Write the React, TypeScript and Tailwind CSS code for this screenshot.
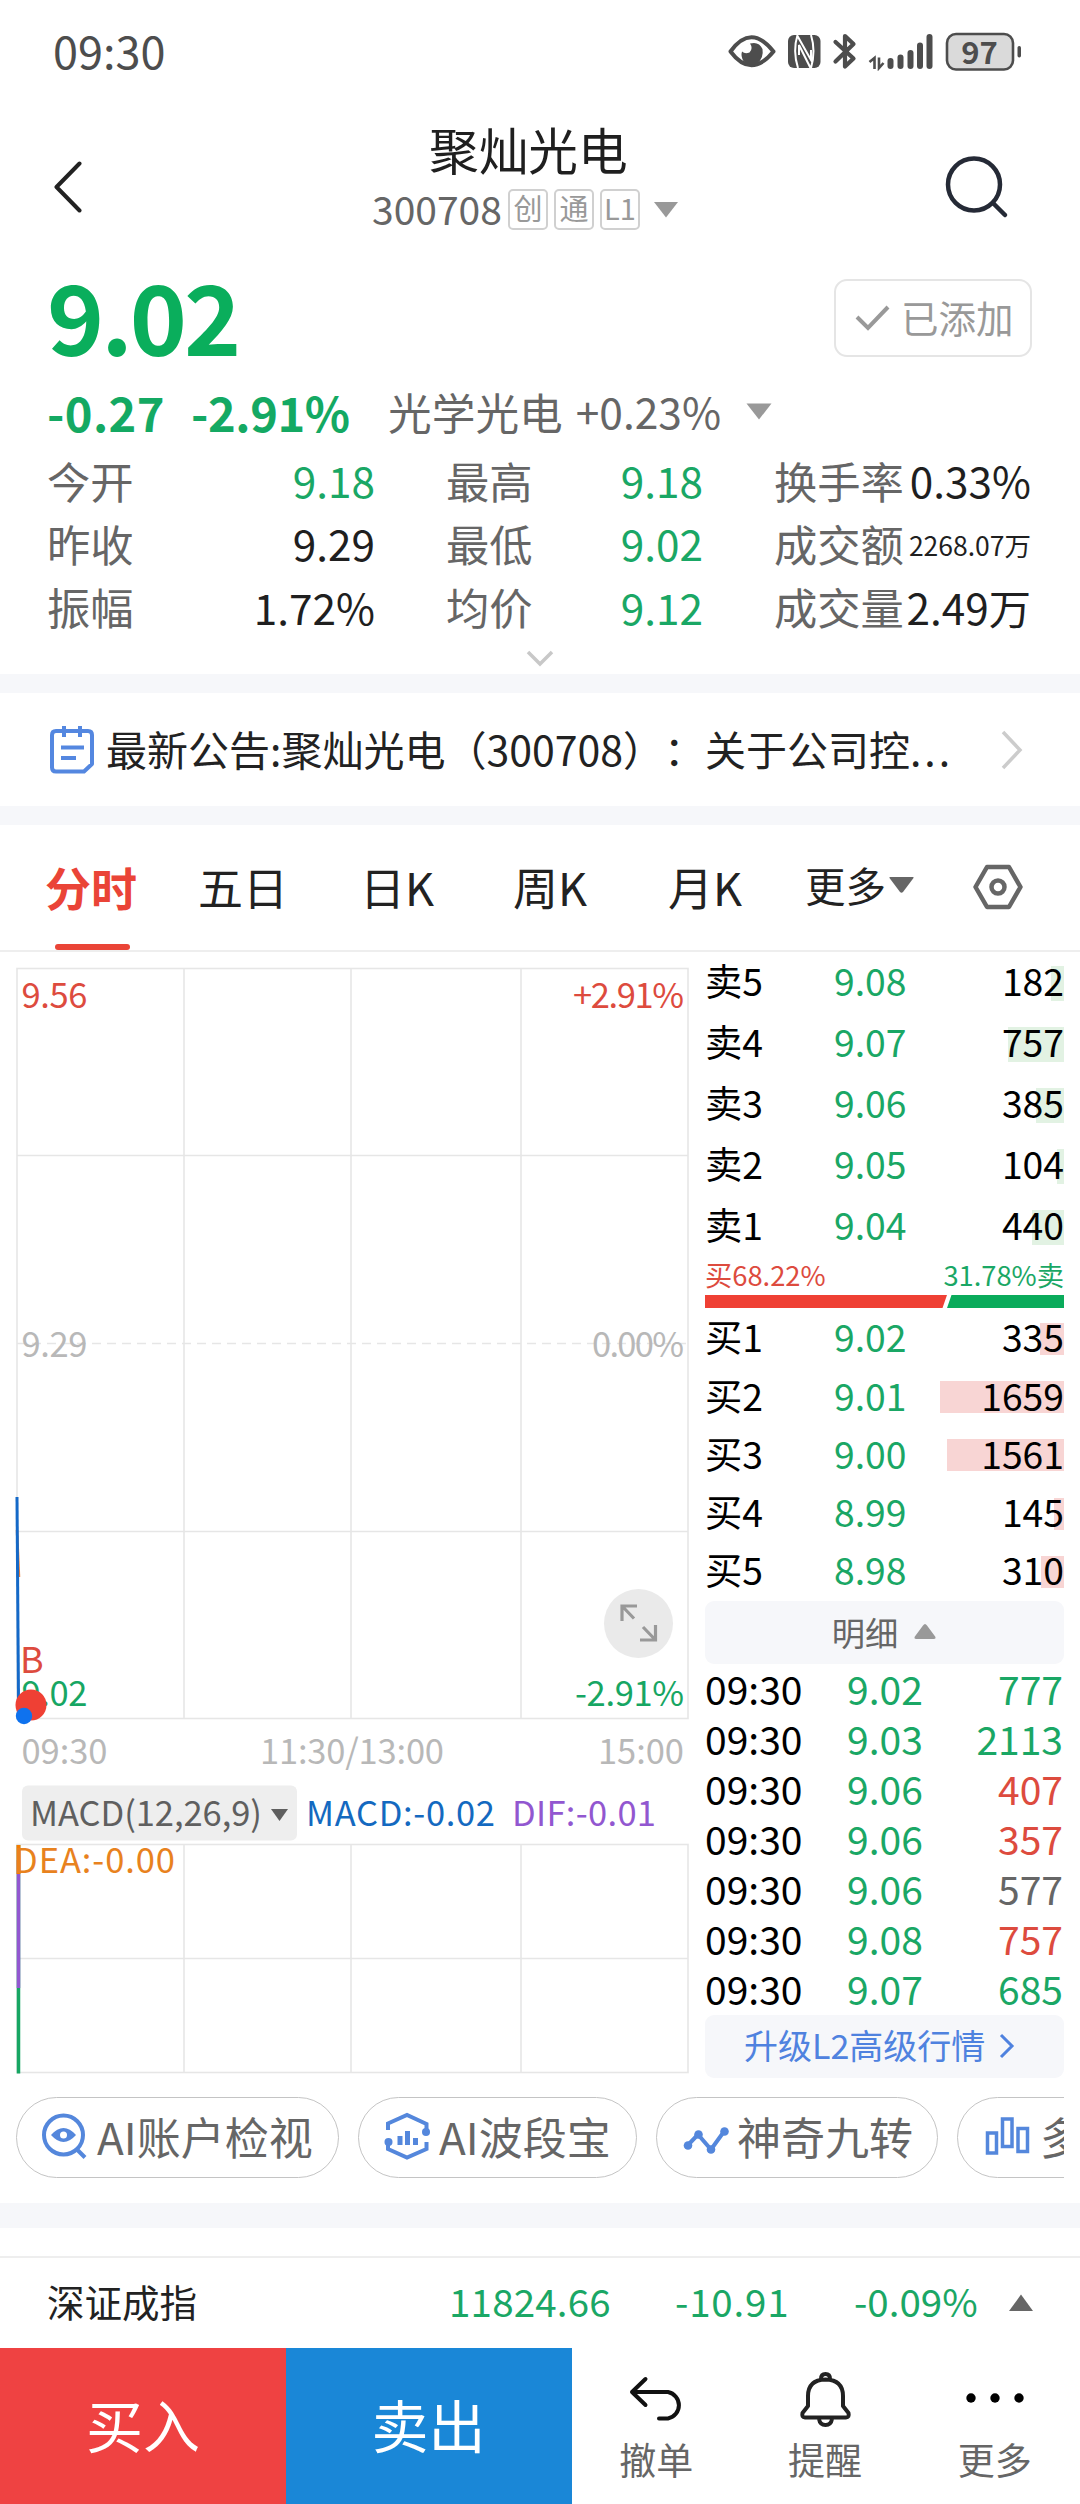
import React from "react";

const GREEN = "#17a663";
const RED = "#dd4b3e";

const quoteRows = [
  [
    { label: "今开", value: "9.18", color: "text-[#1aa765]" },
    { label: "最高", value: "9.18", color: "text-[#1aa765]" },
    { label: "换手率", value: "0.33%", color: "text-[#1f1f1f]" },
  ],
  [
    { label: "昨收", value: "9.29", color: "text-[#1f1f1f]" },
    { label: "最低", value: "9.02", color: "text-[#1aa765]" },
    { label: "成交额", value: "2268.07万", color: "text-[#1f1f1f]", small: true },
  ],
  [
    { label: "振幅", value: "1.72%", color: "text-[#1f1f1f]" },
    { label: "均价", value: "9.12", color: "text-[#1aa765]" },
    { label: "成交量", value: "2.49万", color: "text-[#1f1f1f]" },
  ],
];

const sells = [
  { label: "卖5", price: "9.08", volume: "182", bar: 13 },
  { label: "卖4", price: "9.07", volume: "757", bar: 56 },
  { label: "卖3", price: "9.06", volume: "385", bar: 28 },
  { label: "卖2", price: "9.05", volume: "104", bar: 7 },
  { label: "卖1", price: "9.04", volume: "440", bar: 32 },
];

const buys = [
  { label: "买1", price: "9.02", volume: "335", bar: 24 },
  { label: "买2", price: "9.01", volume: "1659", bar: 124 },
  { label: "买3", price: "9.00", volume: "1561", bar: 117 },
  { label: "买4", price: "8.99", volume: "145", bar: 10 },
  { label: "买5", price: "8.98", volume: "310", bar: 23 },
];

const trades = [
  { price: "9.02", volume: "777", color: "text-[#1aa765]" },
  { price: "9.03", volume: "2113", color: "text-[#1aa765]" },
  { price: "9.06", volume: "407", color: "text-[#dd4b3e]" },
  { price: "9.06", volume: "357", color: "text-[#dd4b3e]" },
  { price: "9.06", volume: "577", color: "text-[#666666]" },
  { price: "9.08", volume: "757", color: "text-[#dd4b3e]" },
  { price: "9.07", volume: "685", color: "text-[#1aa765]" },
];

function StatusBar() {
  return (
    <div className="flex h-[105px] items-center justify-between pl-[53px] pr-[59px] text-[#4d4d4d]">
      <span className="pb-[7px] text-[45px] leading-none">09:30</span>
      <svg width="293" height="40" viewBox="728 31 293 40" className="mb-[3px]">
        <path d="M730.5 51.5 Q751 23 773.5 51.5 Q751 79 730.5 51.5Z" fill="none" stroke="#4d4d4d" strokeWidth="4" strokeLinejoin="round" />
        <path d="M750 43.500 Q759 41 762.500 49 Q764 58 757 63.500 Q749 67 743.500 61 Q740.500 56 742 51.500 Q745 54.500 749.500 52.500 Q753.500 48.500 750 43.500Z" fill="#4d4d4d" />
        <rect x="788" y="35" width="32.500" height="33" rx="6" fill="#4d4d4d" />
        <path d="M797.500 35 Q792.500 51 798 68 M797.500 36 L811 60 V50 M810.500 68 L799 45 V55 M811 35 Q816 51 811 68" fill="none" stroke="#fff" strokeWidth="2" />
        <path d="M835.500 42 L853.500 58.500 L845 66.500 V36 L853.500 44 L835.500 61.500" fill="none" stroke="#4d4d4d" strokeWidth="4.200" strokeLinecap="round" strokeLinejoin="round" />
        <path d="M869.500 62 L874.500 58 V69 M879 57.500 V68 L883.500 63" fill="none" stroke="#4d4d4d" strokeWidth="2.600" />
        <g stroke="#4d4d4d" strokeWidth="6" strokeLinecap="round">
          <path d="M890.500 61 V66" />
          <path d="M900.500 57.500 V66" />
          <path d="M910.500 53 V66" />
          <path d="M920 45.500 V66" />
          <path d="M929.500 37 V66" />
        </g>
        <rect x="947" y="34" width="66" height="35.500" rx="9" fill="#dadada" stroke="#4d4d4d" strokeWidth="2.600" />
        <rect x="1017.500" y="46" width="3.500" height="11.500" rx="1.700" fill="#4d4d4d" />
        <text x="979.500" y="63.500" fontSize="31" fontWeight="700" textAnchor="middle" fill="#4d4d4d">97</text>
      </svg>
    </div>
  );
}

function Header() {
  const tags = ["创", "通", "L1"];
  return (
    <header className="flex h-[153px]">
      <div className="w-[372px] pl-[52px] pt-[56px]">
        <svg width="32" height="52" viewBox="0 0 32 52" fill="none" stroke="#222" strokeWidth="4">
          <path d="M27.500 2.500 L4.500 26 L27.500 49.500" strokeLinecap="round" strokeLinejoin="round" />
        </svg>
      </div>
      <div className="w-[316px]">
        <h1 className="mt-[15px] h-[56px] pl-[57px] text-[49.7px] leading-[56px] text-[#1f1f1f]">聚灿光电</h1>
        <div className="mt-[14px] flex h-[40px] items-center">
          <span className="w-[136px] pb-[4px] text-[39px] leading-none text-[#666]">300708</span>
          {tags.map((tag) => (
            <span
              key={tag}
              className="mt-[-2px] mr-[6px] flex h-[41px] w-[40px] items-center justify-center rounded-[5px] border-2 border-[#d0d0d0] pb-[3px] text-[29px] leading-none text-[#999]"
            >
              {tag}
            </span>
          ))}
          <svg width="26" height="16" viewBox="0 0 26 16" className="ml-[7px]">
            <path d="M1 0 H25 L13 15.500Z" fill="#999" />
          </svg>
        </div>
      </div>
      <div className="pl-[257px] pt-[50px]">
        <svg width="64" height="64" viewBox="0 0 64 64" fill="none" stroke="#252a36" strokeWidth="4.500">
          <circle cx="29" cy="29.500" r="26" />
          <path d="M48 48 L60 60" strokeLinecap="round" />
        </svg>
      </div>
    </header>
  );
}

function Quote() {
  return (
    <section className="h-[416px] pl-[47px] pr-[48px]">
      <div className="flex h-[125px] items-center justify-between">
        <span className="pb-[14px] text-[97px] font-bold leading-none tracking-[-3px] text-[#0aae5c]">9.02</span>
        <button className="mb-[5px] flex h-[78px] w-[198px] items-center rounded-[13px] border-2 border-[#e5e5e5] pl-[19px]">
          <svg width="36" height="28" viewBox="0 0 36 28" fill="none" stroke="#999" strokeWidth="4">
            <path d="M2 13 L13 24 L33 3" />
          </svg>
          <span className="ml-[10px] pb-[3px] text-[37.5px] leading-none text-[#999]">已添加</span>
        </button>
      </div>
      <div className="flex h-[62px] items-center pb-[5px] leading-none">
        <span className="w-[144px] text-[47px] font-bold tracking-[0.4px] text-[#14a963]">-0.27</span>
        <span className="w-[197px] text-[47px] font-bold tracking-[-0.4px] text-[#14a963]">-2.91%</span>
        <span className="text-[43.7px] text-[#666]">光学光电</span>
        <span className="ml-[13px] text-[42.5px] text-[#666]">+0.23%</span>
        <svg width="26" height="17" viewBox="0 0 26 17" className="ml-[25px]">
          <path d="M0.500 0.500 H25.500 L13 16.500Z" fill="#999" />
        </svg>
      </div>
      <div className="mt-[6px] h-[190px]">
        {quoteRows.map((row, i) => (
          <div key={i} className="grid h-[63.3px] grid-cols-[328px_257px_257px] items-center gap-x-[71px] pb-[5px] leading-none">
            {row.map((cell) => (
              <div key={cell.label} className="flex items-center justify-between whitespace-nowrap">
                <span className="text-[43.3px] text-[#666]">{cell.label}</span>
                <span className={`${cell.small ? "pt-[3px] text-[26.5px]" : "text-[42.3px]"} ${cell.color}`}>
                  {cell.value}
                </span>
              </div>
            ))}
          </div>
        ))}
      </div>
      <svg width="28" height="17" viewBox="0 0 28 17" className="ml-[479px] mt-[9px]" fill="none" stroke="#c8c8c8" strokeWidth="3.500">
        <path d="M2 2 L14 14 L26 2" />
      </svg>
    </section>
  );
}

function Notice() {
  return (
    <div className="flex h-[113px] items-center pl-[50px] pr-[57px]">
      <svg width="44" height="50" viewBox="0 0 44 50" fill="none" stroke="#5487e0" strokeWidth="4">
        <path d="M6 6 H38 Q42 6 42 10 V39 L34 46.500 H6 Q2 46.500 2 42.500 V10 Q2 6 6 6Z" strokeLinejoin="round" />
        <path d="M14 1 V12 M30 1 V12 M11 22.500 H34 M11 33 H26" />
      </svg>
      <p className="ml-[12px] w-[850px] whitespace-nowrap pb-[3px] text-[41px] leading-none text-[#222] [text-spacing-trim:space-all]">
        最新公告:聚灿光电（300708）：关于公司控<span className="tracking-[3px]">...</span>
      </p>
      <svg width="22" height="40" viewBox="0 0 22 40" className="ml-auto" fill="none" stroke="#ccc" strokeWidth="3.500">
        <path d="M2 2 L19 20 L2 38" />
      </svg>
    </div>
  );
}

function Tabs() {
  return (
    <nav className="flex h-[127px] items-center border-b-2 border-[#eee] text-[45px] leading-none text-[#222]">
      <div className="relative flex h-full w-[198px] items-center pl-[45px] font-bold text-[#ea4437]">
        <span className="pb-[3px] text-[46px]">分时</span>
        <i className="absolute bottom-0 left-[55px] h-[6px] w-[75px] rounded-full bg-[#ea4437]" />
      </div>
      <span className="w-[162px] pb-[2px]">五日</span>
      <span className="w-[153px] pb-[2px]">日K</span>
      <span className="w-[155px] pb-[2px]">周K</span>
      <span className="w-[137px] pb-[2px]">月K</span>
      <span className="pb-[4px] text-[40.5px]">更多</span>
      <svg width="25" height="16" viewBox="0 0 25 16" className="ml-[3px] mb-[5px]">
        <path d="M1 0 H24 Q25 0 24.500 1 L14 15 Q12.500 16.500 11 15 L0.500 1 Q0 0 1 0Z" fill="#666" />
      </svg>
      <svg width="50" height="46" viewBox="0 0 50 46" className="ml-[59px] mb-[2px]" fill="none" stroke="#666" strokeWidth="4.500" strokeLinejoin="round">
        <path d="M14 3 H36 L47.500 23 L36 43 H14 L2.500 23Z" />
        <circle cx="25" cy="23" r="6.500" />
      </svg>
    </nav>
  );
}

function Charts() {
  return (
    <svg width="700" height="1138" viewBox="0 952 700 1138" className="shrink-0">
      <g stroke="#e6e6e6" strokeWidth="1.600" fill="none">
        <rect x="17" y="968.500" width="671" height="750" />
        <path d="M184 969 V1718 M351 969 V1718 M521 969 V1718 M17 1155.500 H688 M17 1531.500 H688" />
        <path d="M17 1343.500 H688" strokeDasharray="9 6" />
        <rect x="17" y="1844.500" width="671" height="228" />
        <path d="M184 1844 V2072 M351 1844 V2072 M521 1844 V2072 M17 1958.500 H688" />
      </g>
      <g fontSize="34.500">
        <text x="21.500" y="1008" fill={RED} textLength="66">9.56</text>
        <text x="684" y="1008" fill={RED} textAnchor="end" textLength="111">+2.91%</text>
        <text x="21.500" y="1356.500" fill="#b8b8b8" textLength="66">9.29</text>
        <text x="684" y="1356.500" fill="#b8b8b8" textAnchor="end" textLength="92">0.00%</text>
        <text x="21.500" y="1706" fill={GREEN} textLength="66">9.02</text>
        <text x="684" y="1706" fill={GREEN} textAnchor="end" textLength="109">-2.91%</text>
        <text x="21.500" y="1764" fill="#b8b8b8" textLength="86">09:30</text>
        <text x="260" y="1764" fill="#b8b8b8" textLength="184">11:30/13:00</text>
        <text x="684" y="1764" fill="#b8b8b8" textAnchor="end" textLength="86">15:00</text>
      </g>
      <path d="M17 1530 L19 1577" stroke="#e8803c" strokeWidth="2.500" />
      <path d="M17 1497 L18.500 1700" stroke="#1469c8" strokeWidth="3" />
      <text x="20" y="1673" fontSize="36" fill={RED}>B</text>
      <circle cx="31" cy="1705" r="15.500" fill="#ef4034" />
      <circle cx="24" cy="1716" r="8.200" fill="#0f72ee" />
      <circle cx="638.500" cy="1623.500" r="34.500" fill="#eaeaea" />
      <path d="M622 1621 V1606 H637 M622.500 1606.500 L634 1618.500 M655.500 1625 V1640 H640 M655 1639.500 L643 1627" fill="none" stroke="#999" strokeWidth="3.200" />
      <rect x="22" y="1785.500" width="275" height="55" rx="6" fill="#eee" />
      <g fontSize="34.500">
        <text x="30" y="1826" fill="#5f5f5f" textLength="232">MACD(12,26,9)</text>
        <text x="306" y="1826" fill="#1469c0" textLength="189">MACD:-0.02</text>
        <text x="512" y="1826" fill="#9257d0" textLength="144">DIF:-0.01</text>
      </g>
      <path d="M271 1809 H288 L279.500 1821Z" fill="#5f5f5f" />
      <path d="M18.500 1845 V2073.500" stroke={GREEN} strokeWidth="3.500" />
      <path d="M18.500 1860 V1988" stroke="#9257d0" strokeWidth="3.500" />
      <path d="M18.500 1845 V1874" stroke="#f57c00" strokeWidth="4" />
      <text x="14" y="1873" fontSize="34.500" fill="#e8821e" textLength="161">DEA:-0.00</text>
    </svg>
  );
}

function BookRow({ row, side }: { row: (typeof sells)[number]; side: "sell" | "buy" }) {
  return (
    <div className={`relative flex items-center text-[37.3px] leading-none ${side === "sell" ? "h-[61px]" : "h-[58.2px]"}`}>
      <i
        className={`absolute right-0 ${side === "sell" ? "top-[14px] h-[35px] bg-[#e2f2e3]" : "top-[13px] h-[32px] bg-[#f8d5d4]"}`}
        style={{ width: row.bar }}
      />
      <span className="relative w-[129px] pb-[4px] text-black">{row.label}</span>
      <span className="relative pb-[4px] text-[#1aa765]">{row.price}</span>
      <span className="relative ml-auto pb-[4px] text-black">{row.volume}</span>
    </div>
  );
}

function OrderBook() {
  return (
    <aside className="ml-[5px] w-[359px] shrink-0">
      {sells.map((row) => (
        <BookRow key={row.label} row={row} side="sell" />
      ))}
      <div className="flex h-[38px] items-center justify-between pb-[6px] pt-[3px] text-[27.3px] leading-none">
        <span className="text-[#dd4b3e]">买68.22%</span>
        <span className="text-[#1aa765]">31.78%卖</span>
      </div>
      <svg width="359" height="13" viewBox="0 0 359 13" className="block">
        <path d="M0 0 H242 L237.500 13 H0Z" fill="#ef4034" />
        <path d="M246.500 0 H359 V13 H242Z" fill="#0aab5b" />
      </svg>
      <div className="pt-[2px]">
        {buys.map((row) => (
          <BookRow key={row.label} row={row} side="buy" />
        ))}
      </div>
      <div className="flex h-[63px] items-center justify-center rounded-[9px] bg-[#f6f7fa] pb-[1px] text-[33.3px] leading-none text-[#666]">
        <span className="pb-[1px]">明细</span>
        <svg width="22" height="15" viewBox="0 0 22 15" className="ml-[16px] mr-[1px]">
          <path d="M11 0 Q12 0 13 1.500 L21.500 13 Q22 15 20 15 H2 Q0 15 0.500 13 L9 1.500 Q10 0 11 0Z" fill="#999" />
        </svg>
      </div>
      <div className="h-[351px] pt-[2px]">
        {trades.map((trade, i) => (
          <div key={i} className="flex h-[50px] items-center pb-[4px] text-[39px] leading-none">
            <span className="w-[142px] text-black">09:30</span>
            <span className="text-[#1aa765]">{trade.price}</span>
            <span className={`ml-auto pr-[1px] ${trade.color}`}>{trade.volume}</span>
          </div>
        ))}
      </div>
      <div className="flex h-[63px] items-center rounded-[9px] bg-[#f6f7fa] pl-[39px] text-[34px] leading-none text-[#4f82df]">
        <span className="pb-[3px]">升级L2高级行情</span>
        <svg width="16" height="26" viewBox="0 0 16 26" className="ml-[14px]" fill="none" stroke="#4f82df" strokeWidth="3">
          <path d="M2 2 L13 13 L2 24" />
        </svg>
      </div>
    </aside>
  );
}

const chipClass = "flex h-[81px] shrink-0 items-center rounded-full border border-[#c4c4c4] text-[44px] leading-none text-[#666]";

function ToolChips() {
  return (
    <div className="ml-[16px] mr-[16px] mt-[7px] flex h-[81px] gap-[19px] overflow-hidden">
      <div className={`${chipClass} w-[323px] pl-[24px]`}>
        <svg width="48" height="48" viewBox="0 0 48 48" className="mb-[3px]" fill="none" stroke="#5487dc" strokeWidth="4">
          <circle cx="22.500" cy="23" r="19.500" />
          <path d="M35.500 37 L44 45.500" />
          <path d="M10 23 Q22.500 9 35 23 Q22.500 37 10 23Z" fill="#5487dc" stroke="none" />
          <circle cx="22.500" cy="23" r="3.500" fill="#fff" stroke="none" />
        </svg>
        <span className="ml-[8px] pb-[3px]">AI账户检视</span>
      </div>
      <div className={`${chipClass} w-[279px] pl-[24px]`}>
        <svg width="48" height="48" viewBox="0 0 48 48" className="mb-[3px]" fill="none" stroke="#5487dc" strokeWidth="4">
          <path d="M5 18 V11.500 L24 3 L43.500 12 V20 M43.500 30 V37 L24 45.500 L5 37 V29" />
          <circle cx="43" cy="20" r="4" fill="#5487dc" stroke="none" />
          <circle cx="5.500" cy="30" r="4" fill="#5487dc" stroke="none" />
          <path d="M17 24 V33 M24.500 19 V33 M32.500 26 V33" strokeWidth="5" />
        </svg>
        <span className="ml-[8px] pb-[3px]">AI波段宝</span>
      </div>
      <div className={`${chipClass} w-[282px] pl-[26px]`}>
        <svg width="48" height="48" viewBox="0 0 48 48" fill="none" stroke="#5487dc" strokeWidth="4">
          <path d="M5 31 L15 20.500 L28 35.500 L41 17.500" />
          <g fill="#5487dc" stroke="none">
            <circle cx="5" cy="31.500" r="4.300" />
            <circle cx="15.500" cy="20.500" r="4.300" />
            <circle cx="28" cy="35.500" r="4.300" />
            <circle cx="41.500" cy="17.500" r="4.300" />
          </g>
        </svg>
        <span className="ml-[6px] pb-[3px]">神奇九转</span>
      </div>
      <div className={`${chipClass} w-[280px] pl-[27px]`}>
        <svg width="46" height="48" viewBox="0 0 46 48" className="mb-[3px]" fill="none" stroke="#5487dc" strokeWidth="3.500">
          <rect x="2.500" y="21" width="9" height="20" />
          <rect x="17.500" y="7" width="9.500" height="27.500" />
          <rect x="33" y="16.500" width="9.500" height="23" />
        </svg>
        <span className="ml-[9px] pb-[3px]">多</span>
      </div>
    </div>
  );
}

function IndexRow() {
  return (
    <div className="flex h-[92px] items-center border-t-2 border-[#eee] pl-[47px] text-[38.5px] leading-none text-[#1aa765]">
      <span className="w-[402px] pb-[4px] text-[37.5px] text-[#222]">深证成指</span>
      <span className="w-[226px] pb-[5px] tracking-[0.2px]">11824.66</span>
      <span className="w-[179px] pb-[5px] tracking-[0.8px]">-10.91</span>
      <span className="w-[154px] pb-[5px]">-0.09%</span>
      <svg width="26" height="18" viewBox="0 0 26 18">
        <path d="M13 0.500 L25 17 H1Z" fill="#666" />
      </svg>
    </div>
  );
}

function BottomBar() {
  const labelClass = "text-[37px] leading-none text-[#666]";
  return (
    <footer className="flex h-[156px]">
      <button className="w-[286px] bg-[#ef4242] pb-[6px] text-[57px] leading-none text-white">买入</button>
      <button className="w-[286px] bg-[#1a87d7] pb-[6px] pr-[1px] text-[57px] leading-none text-white">卖出</button>
      <div className="mr-[2px] grid flex-1 grid-cols-3">
        <div className="flex flex-col items-center">
          <svg width="58" height="58" viewBox="627 2370 58 58" className="mt-[22px]" fill="none" stroke="#111" strokeWidth="4" strokeLinecap="round" strokeLinejoin="round">
            <path d="M645.500 2379 L632 2392 L645.500 2405 M632 2392 H668 A13.500 13.500 0 0 1 668 2418.500 H659" />
          </svg>
          <span className={`${labelClass} mt-[13px]`}>撤单</span>
        </div>
        <div className="flex flex-col items-center">
          <svg width="58" height="58" viewBox="795 2370 58 58" className="mt-[22px]" fill="none" stroke="#222" strokeWidth="4" strokeLinejoin="round">
            <path d="M807 2406 V2396 Q807 2380 824.500 2379.500 Q842 2380 842 2396 V2406 L847.500 2413 Q848.500 2417.500 845 2417.500 H804 Q800.500 2417.500 801.500 2413Z" />
            <path d="M820 2379 Q820 2374 824.500 2374 Q829 2374 829 2379 M818 2419 Q819 2425 824.500 2425 Q830 2425 831 2419" />
          </svg>
          <span className={`${labelClass} mt-[13px]`}>提醒</span>
        </div>
        <div className="flex flex-col items-center pl-[2px]">
          <svg width="58" height="58" viewBox="966 2370 58 58" className="mt-[22px]" fill="#000">
            <circle cx="971" cy="2398" r="4.700" />
            <circle cx="995" cy="2398" r="4.700" />
            <circle cx="1019" cy="2398" r="4.700" />
          </svg>
          <span className={`${labelClass} mt-[13px]`}>更多</span>
        </div>
      </div>
    </footer>
  );
}

function App() {
  return (
    <div className="h-[2504px] w-[1080px] overflow-hidden bg-white font-['Noto_Sans_CJK_SC','Noto_Sans',sans-serif]">
      <StatusBar />
      <Header />
      <Quote />
      <div className="h-[19px] bg-[#f6f7fa]" />
      <Notice />
      <div className="h-[19px] bg-[#f6f7fa]" />
      <Tabs />
      <div className="flex h-[1138px]">
        <Charts />
        <OrderBook />
      </div>
      <ToolChips />
      <div className="mt-[25px] mb-[28px] h-[25px] bg-[#f6f7fa]" />
      <IndexRow />
      <BottomBar />
    </div>
  );
}

export default App;
